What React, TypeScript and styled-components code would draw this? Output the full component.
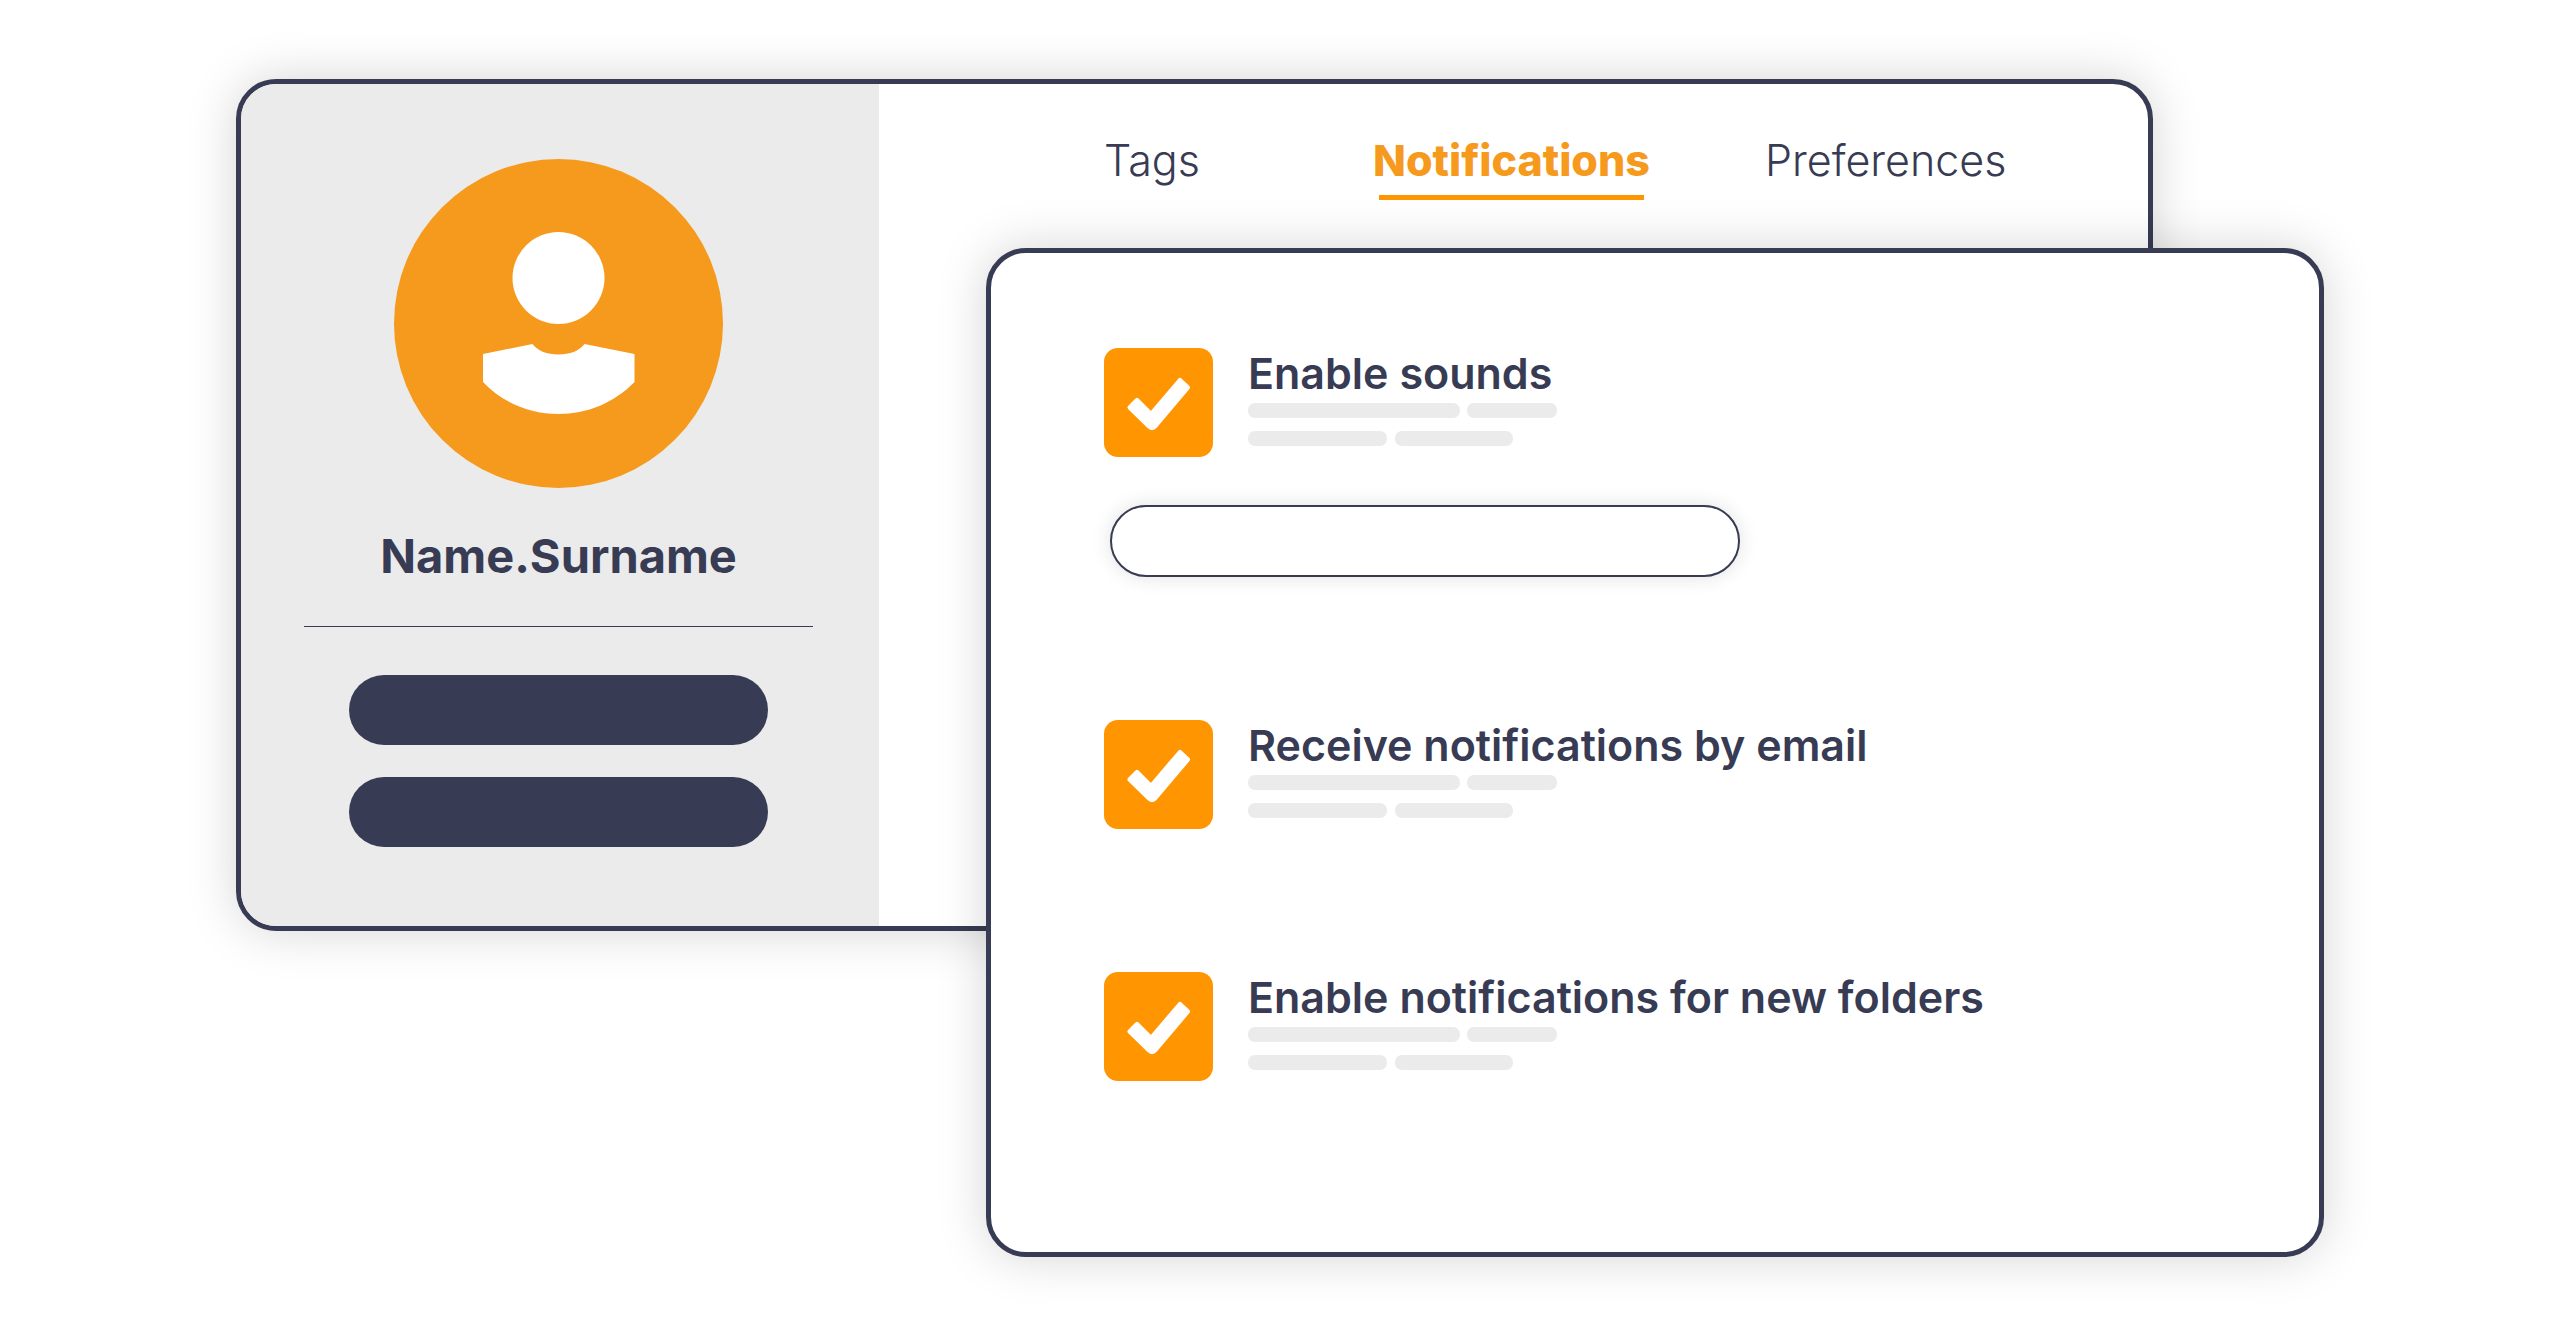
import React, { useState } from "react";
import styled, { createGlobalStyle } from "styled-components";

const navy = "#373b53";
const orange = "#ff9500";
const amber = "#f59a1d";
const grey = "#ebebeb";

const GlobalStyle = createGlobalStyle`
  *, *::before, *::after { box-sizing: border-box; }
  body {
    margin: 0;
    background: #fff;
    color: ${navy};
    font-family: Inter, "Open Sans", sans-serif;
  }
  button, input { font: inherit; color: inherit; }
`;

const Stage = styled.main`
  display: grid;
  grid-template-columns: 236fr 750fr 1167fr 171fr 236fr;
  grid-template-rows: 169px auto 1fr;
  padding: 79px 0 69px;
`;

const Card = styled.section`
  border: 5px solid ${navy};
  border-radius: 40px;
  background: #fff;
  box-shadow: 0 0 50px rgba(0, 0, 0, 0.17);
  overflow: hidden;
`;

const ProfileCard = styled(Card)`
  grid-column: 2 / 4;
  grid-row: 1 / 3;
  display: grid;
  grid-template-columns: 638fr 1269fr;
`;

const SettingsCard = styled(Card)`
  grid-column: 3 / 5;
  grid-row: 2 / 4;
  display: flex;
  flex-direction: column;
  gap: 143px;
  padding: 95px 113px 171px;
`;

const Sidebar = styled.aside`
  display: flex;
  flex-direction: column;
  align-items: center;
  padding: 75px 66px 79px 63px;
  background: ${grey};
`;

const Avatar = styled.svg`
  width: 329px;
  height: 329px;
`;

const UserName = styled.h2`
  margin: 42px 0 44px;
  font-size: 47px;
  line-height: 52px;
  font-weight: 700;
`;

const Divider = styled.hr`
  width: 100%;
  height: 1px;
  margin: 0 0 48px;
  border: 0;
  background: ${navy};
`;

const SidebarActions = styled.div`
  display: flex;
  flex-direction: column;
  gap: 32px;
  width: 419px;
  max-width: 100%;
`;

const SidebarButton = styled.button`
  height: 70px;
  border: 0;
  border-radius: 35px;
  background: ${navy};
`;

const Tabs = styled.nav`
  display: grid;
  grid-template-columns: 269fr 392fr 383fr;
  align-content: start;
  justify-items: start;
  padding: 51px 0 0 225px;
`;

const Tab = styled.button<{ $active: boolean }>`
  padding: 0;
  border: 0;
  background: none;
  font-size: 43px;
  line-height: 50px;
  font-weight: ${(p) => (p.$active ? 800 : 300)};
  color: ${(p) => (p.$active ? amber : navy)};

  &::after {
    content: "";
    display: block;
    height: 5px;
    margin: 10px 6px 0;
    background: ${(p) => (p.$active ? orange : "transparent")};
  }
`;

const Group = styled.div`
  display: flex;
  flex-direction: column;
  gap: 48px;
`;

const Option = styled.label`
  display: flex;
  gap: 35px;
`;

const Tick = styled.span`
  display: grid;
  flex: none;
  width: 109px;
  height: 109px;

  & > * { grid-area: 1 / 1; }
`;

const TickInput = styled.input`
  appearance: none;
  width: 100%;
  height: 100%;
  margin: 0;
  border-radius: 14px;
  background: ${orange};

  &:not(:checked) + svg { visibility: hidden; }
`;

const TickMark = styled.svg`
  width: 100%;
  height: 100%;
  pointer-events: none;
`;

const OptionBody = styled.span`
  display: flex;
  flex-direction: column;
`;

const OptionTitle = styled.span`
  margin-bottom: 5px;
  font-size: 43px;
  line-height: 50px;
  font-weight: 600;
  white-space: nowrap;
`;

const BarRow = styled.span<{ $gap: number }>`
  display: flex;
  gap: ${(p) => p.$gap}px;

  & + & { margin-top: 13px; }
`;

const Bar = styled.span<{ $width: number }>`
  width: ${(p) => p.$width}px;
  height: 15px;
  border-radius: 7px;
  background: ${grey};
`;

const SoundField = styled.input`
  width: 630px;
  max-width: 100%;
  height: 72px;
  margin-left: 6px;
  padding: 0 32px;
  border: 2px solid ${navy};
  border-radius: 36px;
  background: #fff;
  font-size: 32px;
  box-shadow: 0 0 20px rgba(0, 0, 0, 0.12);
`;

function CheckOption({ title }: { title: string }) {
  return (
    <Option>
      <Tick>
        <TickInput type="checkbox" defaultChecked />
        <TickMark viewBox="0 0 109 109" aria-hidden="true">
          <path
            d="M26 59.5 L33 52.5 L47 66.5 L76 32.5 L83.5 39.5 L51 78 Q48 81 45 78 Z"
            fill="#fff"
            stroke="#fff"
            strokeWidth="5"
            strokeLinejoin="round"
          />
        </TickMark>
      </Tick>
      <OptionBody>
        <OptionTitle>{title}</OptionTitle>
        <BarRow $gap={7}>
          <Bar $width={212} />
          <Bar $width={90} />
        </BarRow>
        <BarRow $gap={8}>
          <Bar $width={139} />
          <Bar $width={118} />
        </BarRow>
      </OptionBody>
    </Option>
  );
}

const tabs = ["Tags", "Notifications", "Preferences"];

export default function App() {
  const [active, setActive] = useState("Notifications");
  return (
    <>
      <GlobalStyle />
      <Stage>
        <ProfileCard>
          <Sidebar>
            <Avatar viewBox="0 0 329 329" aria-hidden="true">
              <circle cx="164.5" cy="164.5" r="164.5" fill={amber} />
              <circle cx="164.5" cy="119" r="46" fill="#fff" />
              <path
                d="M89 195 L138.5 185 C144 192 153 195.5 164.5 195.5 C176 195.5 185 192 190.5 185 L240.5 195 V223 C220 244 193 255 164.5 255 C136 255 109 244 89 223 Z"
                fill="#fff"
              />
            </Avatar>
            <UserName>Name.Surname</UserName>
            <Divider />
            <SidebarActions>
              <SidebarButton type="button" aria-label="Profile" />
              <SidebarButton type="button" aria-label="Account" />
            </SidebarActions>
          </Sidebar>
          <Tabs>
            {tabs.map((name) => (
              <Tab
                key={name}
                type="button"
                $active={name === active}
                onClick={() => setActive(name)}
              >
                {name}
              </Tab>
            ))}
          </Tabs>
        </ProfileCard>
        <SettingsCard>
          <Group>
            <CheckOption title="Enable sounds" />
            <SoundField type="text" aria-label="Sound" />
          </Group>
          <CheckOption title="Receive notifications by email" />
          <CheckOption title="Enable notifications for new folders" />
        </SettingsCard>
      </Stage>
    </>
  );
}
